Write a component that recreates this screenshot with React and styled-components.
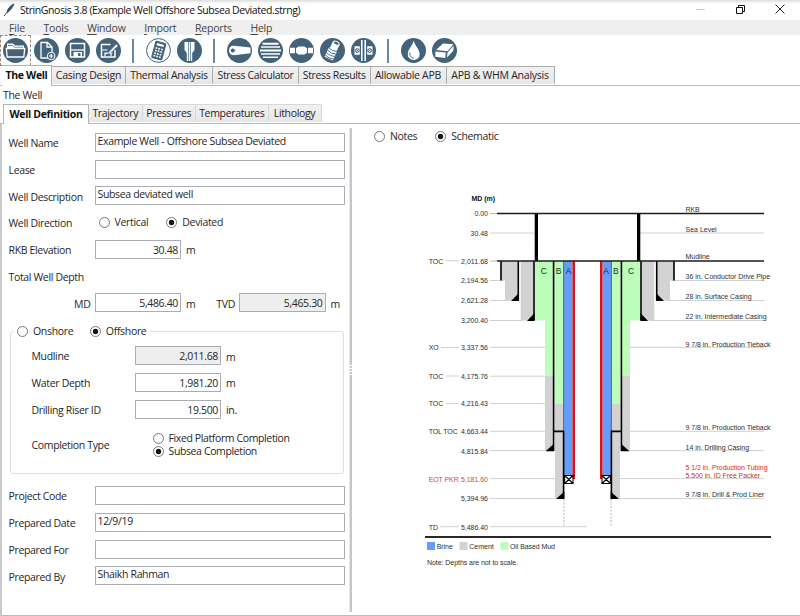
import React from "react";
import styled, { createGlobalStyle, css } from "styled-components";

const INK = "#42637a";

const GlobalStyle = createGlobalStyle`
  * { box-sizing: border-box; }
  html, body { margin: 0; padding: 0; background: #fff; overflow: hidden; }
  body { font-family: "Open Sans", "Noto Sans", sans-serif; font-size: 10.5px; letter-spacing: -0.34px; color: #262626; }
`;

const Window = styled.div`
  width: 800px;
  height: 616px;
  display: flex;
  flex-direction: column;
  background: #fff;
  white-space: nowrap;
`;

const TitleBar = styled.header`
  height: 20px;
  flex: none;
  display: flex;
  align-items: center;
  padding: 0 15px 0 3px;
  background: linear-gradient(#dcdcdc 0, #fafafa 3px, #fff 5px);
`;
const Title = styled.span`
  margin-left: 5px;
  color: #111;
  letter-spacing: -0.42px;
  flex: 1;
`;
const WindowButtons = styled.div`
  display: flex;
  align-items: center;
  gap: 30.5px;
  margin-top: -2px;
`;

const MenuBar = styled.nav`
  height: 15px;
  flex: none;
  display: flex;
  align-items: center;
  gap: 18.6px;
  padding: 1px 0 0 9px;
  background: #efefef;
  color: #444;
  letter-spacing: -0.2px;
`;
const Mnemonic = styled.span`
  text-decoration: underline;
  text-underline-offset: 2px;
  text-decoration-thickness: 1px;
`;

const Toolbar = styled.div`
  height: 29px;
  flex: none;
  display: flex;
  align-items: center;
  gap: 6px;
  padding: 2px 0 0 2.5px;
`;
const ToolButton = styled.button`
  width: 25px;
  height: 25px;
  padding: 0;
  border: 0;
  background: none;
  ${(p) => p.$focused && css`outline: 1px dashed #a08878; outline-offset: 2px;`}
  svg { display: block; }
`;
const ToolDivider = styled.i`
  width: 2px;
  height: 24px;
  margin: 0 5.5px;
  background: #6c8798;
`;

const TabStrip = styled.div`
  flex: none;
  display: flex;
  align-items: flex-end;
  height: ${(p) => p.$height}px;
  padding-left: ${(p) => p.$indent}px;
  border-bottom: 1px solid #b9b9b9;
`;
const Tab = styled.div`
  width: ${(p) => p.$w}px;
  height: 18px;
  line-height: 17px;
  text-align: center;
  letter-spacing: ${(p) => p.$ls || -0.34}px;
  margin-bottom: 1px;
  border: 1px solid ${(p) => (p.$light ? "#d8d8d8" : "#ababab")};
  border-left-width: 0;
  border-bottom-color: #e6e6e6;
  background: linear-gradient(#f1f1f1, #e7e7e7);
  ${(p) => p.$active && css`
    height: ${p.$light ? 20 : 21}px;
    margin-bottom: -1px;
    line-height: 19px;
    background: #fff;
    border-color: #b4b4b4;
    border-bottom: 0;
    border-left-width: ${p.$light ? 1 : 0}px;
    font-weight: 700;
    color: #111;
  `}
`;

const Caption = styled.div`
  height: 18px;
  line-height: 19px;
  padding-left: 3px;
  flex: none;
`;

const Body = styled.main`
  flex: 1;
  min-height: 0;
  display: flex;
  border-left: 2px solid #c9c9c9;
  border-bottom: 1px solid #bbb;
`;
const FormPane = styled.section`
  width: 347px;
  flex: none;
  padding: 5px 0 0 6px;
`;
const Splitter = styled.div`
  width: 3px;
  height: 484px;
  margin-top: 4px;
  background: linear-gradient(90deg, #e8e8e8 0 1px, #c6c6c6 1px);
  display: flex;
  flex-direction: column;
  justify-content: center;
  gap: 2px;
`;
const Grip = styled.i`
  height: 1px;
  background: #fff;
`;
const Row = styled.div`
  height: 26.75px;
  display: flex;
  align-items: center;
`;
const Label = styled.label`
  width: ${(p) => p.$w}px;
  flex: none;
  padding-top: 1.5px;
  padding-left: ${(p) => (p.$align ? 0 : 0.5)}px;
  text-align: ${(p) => p.$align || "left"};
  padding-right: ${(p) => (p.$align ? 4 : 0)}px;
`;
const Field = styled.div`
  width: ${(p) => p.$w || 250}px;
  height: 19px;
  line-height: ${(p) => (p.$numeric ? 18 : 15)}px;
  padding: 0 2px;
  border: 1px solid #a9acb2;
  background: ${(p) => (p.$readOnly ? "#eee" : "#fff")};
  text-align: ${(p) => (p.$numeric ? "right" : "left")};
`;
const Unit = styled.span`
  width: 20px;
  padding: 2px 0 0 5px;
`;
const RadioLabel = styled.div`
  display: flex;
  align-items: center;
  gap: 5px;
  line-height: 13px;
  margin-left: ${(p) => p.$ml || 0}px;
  letter-spacing: ${(p) => p.$ls || -0.32}px;
`;
const Dot = styled.i`
  width: 11px;
  height: 11px;
  flex: none;
  border: 1px solid #777;
  border-radius: 50%;
  background: ${(p) => (p.$on ? "radial-gradient(circle, #151515 2.4px, #fff 3.1px)" : "#fff")};
`;
const GroupBox = styled.fieldset`
  width: 334px;
  height: 150px;
  margin: 8px 0 8px 2px;
  padding: 4px 0 0 20px;
  border: 1px solid #dedede;
  border-radius: 3px;
`;
const Legend = styled.legend`
  display: flex;
  height: 14px;
  margin-left: -17px;
  padding: 0 4px 0 3px;
`;
const CompletionRow = styled(Row)`
  margin-top: 8px;
`;
const Stack = styled.div`
  display: flex;
  flex-direction: column;
  padding-top: 2px;
`;
const SchematicPane = styled.section`
  flex: 1;
  min-width: 0;
`;
const ViewSwitch = styled.div`
  display: flex;
  height: 26px;
  align-items: center;
  padding: 0 0 2px 22px;
`;

function Radio({ on, children, ml, ls }) {
  return <RadioLabel $ml={ml} $ls={ls}><Dot $on={on} />{children}</RadioLabel>;
}

const Disc = ({ children }) => (
  <svg width="25" height="25" viewBox="0 0 25 25" fill="none" stroke="#fff">
    <circle cx="12.5" cy="12.5" r="12.5" fill={INK} stroke="none" />
    {children}
  </svg>
);

const icons = {
  open: <Disc><path d="M4 10V5.500h6l2 2h9V10z" fill="#fff" stroke="none" /><path d="M5 7.500h4.500l2 1.800H20" stroke={INK} strokeWidth=".8" /><path d="M3.300 10.500h18.400l-.9 8.500H4.200z" strokeWidth="1.300" fill={INK} /></Disc>,
  add: <Disc><path d="M14.500 20h-7.500v-15.500h6.500l4.500 4.500v5M13 4.500V9h5" strokeWidth="1.300" /><circle cx="17.200" cy="18" r="3.800" fill={INK} /><path d="M17.200 15.800v4.400M15 18h4.400" strokeWidth="1.200" /></Disc>,
  save: <Disc><path d="M5.500 5.500h14v13.500h-14z" strokeWidth="1.500" /><path d="M5.500 12h14" strokeWidth="1.300" /><path d="M8.500 14h8.500v5h-8.500z" fill="#fff" stroke="none" /><path d="M13 15h2.500v3h-2.500z" fill={INK} stroke="none" /></Disc>,
  edit: <Disc><path d="M14.500 6.500h-9v12.500h13.500v-7" strokeWidth="1.500" /><path d="M5.500 12h6M8.500 15h8M9 18.300v-3h6v3" strokeWidth="1.200" /><path d="M20.500 6l-7 7-1.700 3 3.200-1.200 7-7z" fill="#fff" stroke={INK} strokeWidth=".5" /></Disc>,
  calc: (
    <svg width="25" height="25" viewBox="0 0 25 25" fill="none" stroke={INK}>
      <circle cx="12.5" cy="12.5" r="11.900" />
      <g transform="rotate(15 12.5 12.5)">
        <rect x="7.600" y="4" width="10.400" height="17" rx="1" fill={INK} />
        <path d="M9.200 6.800h7.200" stroke="#fff" strokeWidth="2.200" />
        <path d="M9 10.600h8M9 13.300h8M9 16h8M9 18.700h8" stroke="#fff" strokeWidth="1.500" strokeDasharray="1.800 1" />
      </g>
    </svg>
  ),
  hanger: <Disc><path d="M7.500 4h3.800v19h-1.500v-8l-2.300-3zM17.500 4h-3.800v19h1.500v-8l2.300-3zM12 4h1v19h-1z" fill="#fff" stroke="none" /></Disc>,
  pipe: <Disc><path d="M7 7.800l16.500 1.700v5.800L7 17.200z" fill="#fff" stroke="none" /><ellipse cx="6" cy="12.500" rx="4" ry="4.700" fill="#fff" stroke="none" /><circle cx="5.800" cy="12.500" r="2.500" fill={INK} /></Disc>,
  layers: <Disc><path d="M4.500 5.800h16M2 12.500h21" strokeWidth="2" /><path d="M3 9.100h19M3 15.900h19M5 19.300h15" strokeWidth="1.500" /></Disc>,
  joint: <Disc><path d="M1 9.800h5v5.400H1zM19 9.800h5v5.400h-5z" fill="#fff" stroke="none" /><path d="M7 10.300l2.500-1.800h6l2.500 1.800v4.400l-2.500 1.800h-6L7 14.700z" fill="#fff" stroke="none" /></Disc>,
  thread: <Disc><g transform="rotate(25 12.5 12.5)"><path d="M9 4h7.500v7H9zM8 11h9v10.500H8z" fill="#fff" stroke="none" /><ellipse cx="12.800" cy="4.300" rx="3" ry="1.700" fill={INK} /><path d="M8 11.500q4.500 2 9 0M8 14.200q4.500 2 9 0M8 17q4.500 2 9 0M8 19.700q4.500 2 9 0" stroke={INK} strokeWidth=".8" /></g></Disc>,
  flange: <Disc><path d="M10.800 2v21M14.200 2v21" strokeWidth="1.600" /><path d="M3.500 8.200h5.300v8.600H3.500zM16.200 8.200h5.300v8.600h-5.300z" fill="#fff" stroke="none" /><circle cx="6.300" cy="12.500" r="1.900" stroke={INK} /><circle cx="18.700" cy="12.500" r="1.900" stroke={INK} /><path d="M5 11l2.600 3M7.600 11L5 14M17.400 11l2.600 3M20 11l-2.600 3" stroke={INK} strokeWidth=".6" /></Disc>,
  drop: <Disc><path d="M12.700 2.500C11.500 8 6.800 11 6.800 16.200a5.900 5.900 0 0 0 11.800 0C18.600 11 13.900 8 12.700 2.500z" fill="#fff" stroke="none" /><path d="M9 14.500c-.8 3 1 5.500 3.700 5.600" stroke={INK} /></Disc>,
  ingot: <Disc><path d="M4 12l7-6.500 10.500.8-6 7zM3.300 13.500l10.500 1-.5 5.500-10-1.200zM15.500 14.500l6-6.800v4.800L15 19.500z" fill="#fff" stroke="none" /></Disc>,
};

const toolGroups = [
  ["open", "add", "save", "edit"],
  ["calc", "hanger"],
  ["pipe", "layers", "joint", "thread", "flange"],
  ["drop", "ingot"],
];

const depths = [
  ["0.00", 213.5], ["30.48", 233], ["2,011.68", 261, "TOC"], ["2,194.56", 280.8],
  ["2,621.28", 300.6], ["3,200.40", 320.6], ["3,337.56", 347.8, "XO"], ["4,175.76", 376.3, "TOC"],
  ["4,216.43", 403.9, "TOC"], ["4,663.44", 431.8, "TOL TOC"], ["4,815.84", 451.2],
  ["5,181.60", 479, "EOT PKR"], ["5,394.96", 498.8], ["5,486.40", 527, "TD"],
];
const depthWidths = { 4: 13.5, 5: 17.5, 8: 27 };
const tagWidths = { TOC: 14.5, XO: 10, "TOL TOC": 29, "EOT PKR": 30, TD: 9.3 };
const callouts = [
  ["RKB", 211.9, 14], ["Sea Level", 232, 31], ["Mudline", 259.4, 24],
  ["36 in. Conductor Drive Pipe", 279.2, 84.5], ["28 in. Surface Casing", 299, 66],
  ["22 in. Intermediate Casing", 319, 81], ["9 7/8 in. Production Tieback", 346.5, 85],
  ["9 7/8 in. Production Tieback", 430.2, 85], ["14 in. Drilling Casing", 450, 63.5],
  ["5 1/2 in. Production Tubing", 470, 82, "#f01c24"], ["5.500 in. ID Free Packer", 477.5, 74.5, "#c0392f"],
  ["9 7/8 in. Drill & Prod Liner", 497.2, 78.5],
];
// y, end of the line on the left side, start of the line on the right side
const leaders = [
  [233, 534, 640], [280.5, 504, 672], [300.5, 508, 667], [320.5, 523, 650], [347.3, 545, 630],
  [376.2, 545], [403.5, 545], [431.3, 545, 630], [450.6, 547, 628], [478.6, 555, 619], [498.6, 557, 617], [526.7, 587],
];

const Chart = styled.svg`
  display: block;
  margin-left: 58px;
  font-family: "Liberation Sans", Arial, sans-serif;
  font-size: 7px;
  letter-spacing: 0;
  fill: #303030;
`;

function HalfWell() {
  return (
    <g>
      <path d="M501 261h17v39.500h-13v-20h-4zM520.700 261h13v59.500h-13z" fill="#d2d2d2" />
      <path d="M535 261h18v115h-8v-55.500h-10zM554.500 261h9v142.500h-9z" fill="#bdfdba" />
      <path d="M545 376h8v75h-8zM554.500 403.500h9v27.500h-9zM555 432h8v66.500h-8z" fill="#d2d2d2" />
      <path d="M564 261h8.500v214h-8.500z" fill="#659dfb" />
      <path d="M572.500 261h2.500v218h-2.500z" fill="#dc1018" />
      <path d="M534.700 213.500h3.300v47.500h-3.300z" fill="#000" />
      <path d="M501 261v19.500M518.300 261v39.500M534 261v59.500M553.600 261v190" stroke="#000" strokeWidth="1.600" />
      <path d="M563.600 261v170" stroke="#4a5560" strokeWidth=".9" />
      <path d="M554 431.400h9.600v67" fill="none" stroke="#000" strokeWidth="1.600" />
      <path d="M507 300.900h4l8-8v8zM524 320.900h3l7.500-8v8zM545.500 451.300l8.500-7.500v7.500zM556 499l8.300-7.500v7.500z" fill="#000" />
      <path d="M564.600 475.500h8.400v8h-8.400zM564.600 475.500l8.400 8M573 475.500l-8.400 8" fill="#fff" stroke="#000" strokeWidth="1.100" />
      <path d="M563.900 499v28" stroke="#dba98a" strokeDasharray="2 1.500" />
    </g>
  );
}

function Schematic() {
  return (
    <Chart width="390" height="426" viewBox="410 150 390 426">
      {leaders.map(([y, left, right]) => (
        <path key={y} d={`M490 ${y}H${left}${right ? `M${right} ${y}H764` : ""}`} stroke="#c4c4c4" strokeWidth=".8" />
      ))}
      <path d="M490 213.500h7M490 261h7" stroke="#bbb" />
      <HalfWell />
      <g transform="matrix(-1 0 0 1 1175 0)"><HalfWell /></g>
      <path d="M497 213.500H764M497 261H764" stroke="#1c1c1c" strokeWidth="1.300" />
      <text x="471.500" y="201" fontWeight="700" textLength="23.500" fill="#111">MD (m)</text>
      {depths.map(([d, y, tag]) => {
        const color = tag === "EOT PKR" ? "#c8503c" : undefined;
        const w = depthWidths[d.length];
        const tw = tagWidths[tag];
        return (
          <g key={d} fill={color}>
            <text x={488 - w} y={y + 2.5} textLength={w}>{d}</text>
            {tag && <text x="428.700" y={y + 2.5} textLength={tw}>{tag}</text>}
            {tag && tw < 20 && <path d={`M${431 + tw} ${y - 0.3}H459`} stroke="#c4c4c4" strokeWidth=".8" />}
          </g>
        );
      })}
      {callouts.map(([t, y, w, color]) => (
        <text key={y} x="685.600" y={y} textLength={w} fill={color}>{t}</text>
      ))}
      <g fontSize="8.500" textAnchor="middle" fill="#16321a">
        <text x="543.700" y="274">C</text><text x="558.700" y="274">B</text><text x="568.500" y="274">A</text>
        <text x="606.200" y="274">A</text><text x="615.800" y="274">B</text><text x="631" y="274">C</text>
      </g>
      <path d="M425 537H771" stroke="#2b2629" strokeWidth="2" />
      <path d="M427 542h8v8h-8z" fill="#659dfb" />
      <path d="M459.500 542h8v8h-8z" fill="#d2d2d2" />
      <path d="M500.500 542h8v8h-8z" fill="#bdfdba" />
      <text x="436.800" y="549" textLength="16">Brine</text>
      <text x="469.300" y="549" textLength="24.500">Cement</text>
      <text x="510" y="549" textLength="45">Oil Based Mud</text>
      <text x="427" y="565.300" textLength="91">Note: Depths are not to scale.</text>
    </Chart>
  );
}

function TextRow({ label, value }) {
  return <Row><Label $w={86.5}>{label}</Label><Field>{value}</Field></Row>;
}
function DepthRow({ label, value, unit, readOnly }) {
  return (
    <Row>
      <Label $w={103.5}>{label}</Label>
      <Field $w={86.5} $numeric $readOnly={readOnly}>{value}</Field>
      <Unit>{unit}</Unit>
    </Row>
  );
}

export default function App() {
  return (
    <Window>
      <GlobalStyle />
      <TitleBar>
        <svg width="12" height="14" viewBox="0 0 12 14"><path d="M11 1C7 2.500 4.500 6 4 9.500c3-1.500 5-4.500 7-8.500zM4.500 9L1 13" fill="#2d5573" stroke="#2d5573" /></svg>
        <Title>StrinGnosis 3.8 (Example Well Offshore Subsea Deviated.strng)</Title>
        <WindowButtons>
          <svg width="9" height="9" stroke="#ccc"><path d="M0 4.500h9" /></svg>
          <svg width="9" height="9" fill="none" stroke="#111"><path d="M.5 2.500h6v6h-6zM2.500 2.500v-2h6v6h-2" /></svg>
          <svg width="10" height="10" stroke="#222"><path d="M.5.500l9 9M9.500.500l-9 9" /></svg>
        </WindowButtons>
      </TitleBar>
      <MenuBar>
        {["File", "Tools", "Window", "Import", "Reports", "Help"].map((m) => (
          <span key={m}><Mnemonic>{m[0]}</Mnemonic>{m.slice(1)}</span>
        ))}
      </MenuBar>
      <Toolbar>
        {toolGroups.map((group, i) => (
          <React.Fragment key={group[0]}>
            {i > 0 && <ToolDivider />}
            {group.map((name) => <ToolButton key={name} aria-label={name} $focused={name === "open"}>{icons[name]}</ToolButton>)}
          </React.Fragment>
        ))}
      </Toolbar>
      <TabStrip $height={22} $indent={2}>
        <Tab $active $w={50}>The Well</Tab>
        <Tab $w={74} $ls={-0.22}>Casing Design</Tab>
        <Tab $w={87}>Thermal Analysis</Tab>
        <Tab $w={86}>Stress Calculator</Tab>
        <Tab $w={71.5}>Stress Results</Tab>
        <Tab $w={76} $ls={-0.28}>Allowable APB</Tab>
        <Tab $w={108} $ls={-0.25}>APB &amp; WHM Analysis</Tab>
      </TabStrip>
      <Caption>The Well</Caption>
      <TabStrip $height={20} $indent={3}>
        <Tab $light $active $w={86}>Well Definition</Tab>
        <Tab $light $w={53.5}>Trajectory</Tab>
        <Tab $light $w={53.5}>Pressures</Tab>
        <Tab $light $w={72.5}>Temperatures</Tab>
        <Tab $light $w={53}>Lithology</Tab>
      </TabStrip>
      <Body>
        <FormPane>
          <TextRow label="Well Name" value="Example Well - Offshore Subsea Deviated" />
          <TextRow label="Lease" />
          <TextRow label="Well Description" value="Subsea deviated well" />
          <Row><Label $w={90.5}>Well Direction</Label><Radio>Vertical</Radio><Radio on ml={18}>Deviated</Radio></Row>
          <Row><Label $w={86.5}>RKB Elevation</Label><Field $w={86.5} $numeric>30.48</Field><Unit>m</Unit></Row>
          <Row><Label $w={86.5}>Total Well Depth</Label></Row>
          <Row>
            <Label $w={86.5} $align="right">MD</Label><Field $w={86.5} $numeric>5,486.40</Field><Unit>m</Unit>
            <Label $w={38} $align="right">TVD</Label><Field $w={86.5} $numeric $readOnly>5,465.30</Field><Unit>m</Unit>
          </Row>
          <GroupBox>
            <Legend><Radio>Onshore</Radio><Radio on ml={16.5}>Offshore</Radio></Legend>
            <DepthRow label="Mudline" value="2,011.68" unit="m" readOnly />
            <DepthRow label="Water Depth" value="1,981.20" unit="m" />
            <DepthRow label="Drilling Riser ID" value="19.500" unit="in." />
            <CompletionRow>
              <Label $w={121.5}>Completion Type</Label>
              <Stack><Radio ls={-0.38}>Fixed Platform Completion</Radio><Radio on ls={-0.38}>Subsea Completion</Radio></Stack>
            </CompletionRow>
          </GroupBox>
          <TextRow label="Project Code" />
          <TextRow label="Prepared Date" value="12/9/19" />
          <TextRow label="Prepared For" />
          <TextRow label="Prepared By" value="Shaikh Rahman" />
        </FormPane>
        <Splitter><Grip /><Grip /><Grip /><Grip /></Splitter>
        <SchematicPane>
          <ViewSwitch><Radio>Notes</Radio><Radio on ml={18}>Schematic</Radio></ViewSwitch>
          <Schematic />
        </SchematicPane>
      </Body>
    </Window>
  );
}
